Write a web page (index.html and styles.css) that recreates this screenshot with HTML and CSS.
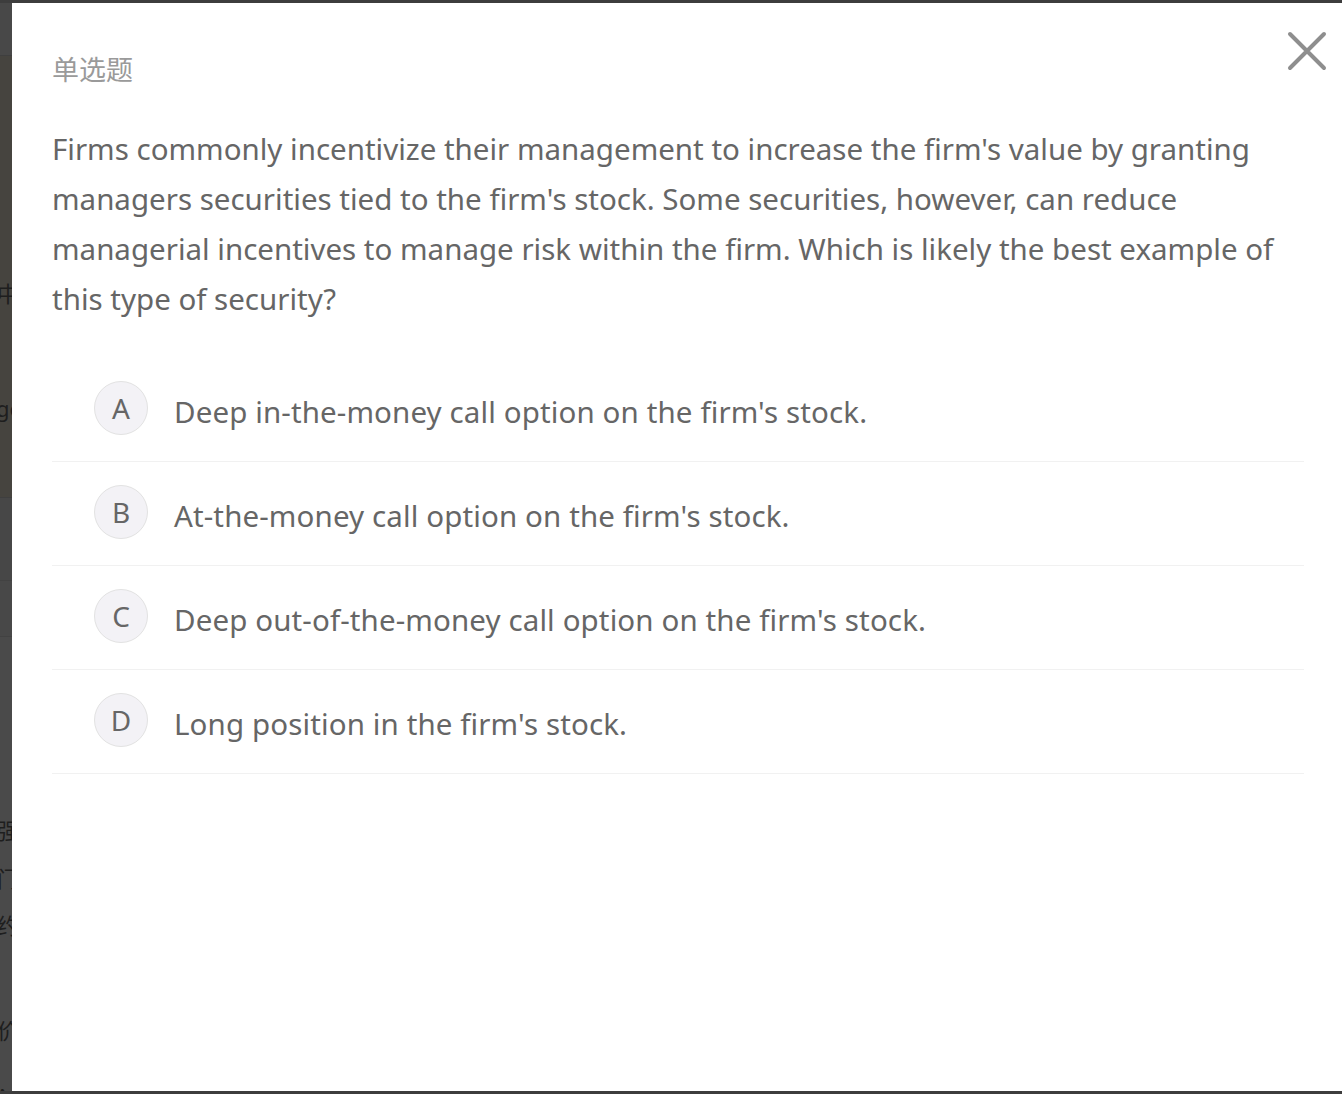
FILE: index.html
```html
<!DOCTYPE html>
<html lang="zh">
<head>
<meta charset="utf-8">
<title>单选题</title>
<link rel="stylesheet" href="styles.css">
</head>
<body>
<div class="screen">
  <div class="backdrop">
    <div class="bg-band bg-top"></div>
    <div class="bg-band bg-mid">
      <div class="bg-text bg-t1">中</div>
      <div class="bg-text bg-t2">ge</div>
    </div>
    <div class="bg-band bg-row"></div>
    <div class="bg-band bg-row2"></div>
    <div class="bg-band bg-low">
      <div class="bg-text bg-t3">强</div>
      <div class="bg-text bg-t4">门</div>
      <div class="bg-text bg-t5">约</div>
      <div class="bg-text bg-t6">价</div>
      <div class="bg-text bg-t7">，</div>
    </div>
  </div>
  <div class="modal">
    <button class="close" aria-label="关闭">
      <svg width="40" height="40" viewBox="0 0 40 40"><path d="M3 3 L37 37 M37 3 L3 37" stroke="#8e8e8e" stroke-width="4" stroke-linecap="round" fill="none"/></svg>
    </button>
    <div class="type">单选题</div>
    <p class="question">Firms commonly incentivize their management to increase the firm's value by granting managers securities tied to the firm's stock. Some securities, however, can reduce managerial incentives to manage risk within the firm. Which is likely the best example of this type of security?</p>
    <ul class="options">
      <li class="option"><span class="letter">A</span><span class="text">Deep in-the-money call option on the firm's stock.</span></li>
      <li class="option"><span class="letter">B</span><span class="text">At-the-money call option on the firm's stock.</span></li>
      <li class="option"><span class="letter">C</span><span class="text">Deep out-of-the-money call option on the firm's stock.</span></li>
      <li class="option"><span class="letter">D</span><span class="text">Long position in the firm's stock.</span></li>
    </ul>
  </div>
</div>
</body>
</html>
```
FILE: styles.css
```css
html, body {
  margin: 0;
  padding: 0;
}
body {
  background: #3d3d3d;
  font-family: "Noto Sans", "Noto Sans CJK SC", sans-serif;
  color: #666;
}
.screen {
  display: flex;
  height: 1094px;
  padding: 3px 0 3px 0;
  box-sizing: border-box;
  overflow: hidden;
}
.backdrop {
  width: 12px;
  flex: none;
  display: flex;
  flex-direction: column;
  overflow: hidden;
  background: #4a4a4a;
}
.bg-band {
  flex: none;
  overflow: hidden;
}
.bg-top {
  height: 52px;
  background: #484848;
  border-bottom: 1px solid #3f3f3f;
}
.bg-mid {
  height: 441px;
  background: #46443f;
  border-bottom: 1px solid #3f3f3f;
}
.bg-row {
  height: 82px;
  background: #474747;
  border-bottom: 1px solid #424242;
}
.bg-row2 {
  height: 55px;
  background: #484848;
  border-bottom: 1px solid #424242;
}
.bg-low {
  flex: 1;
  background: #4a4a4a;
}
.bg-text {
  margin-left: -3px;
  white-space: nowrap;
  font-size: 22px;
  line-height: 24px;
  color: #1e1e1e;
  font-family: "Noto Sans CJK SC", sans-serif;
}
.bg-t1 { margin-top: 224px; }
.bg-t2 { margin-top: 92px; margin-left: -4px; font-family: "Noto Sans", sans-serif; }
.bg-t3 { margin-top: 180px; }
.bg-t4 { margin-top: 24px; }
.bg-t5 { margin-top: 23px; }
.bg-t6 { margin-top: 81px; }
.bg-t7 { margin-top: 31px; }

.modal {
  position: relative;
  flex: 1;
  background: #fff;
  padding: 46px 38px 0 40px;
  box-sizing: border-box;
}
.close {
  position: absolute;
  top: 28px;
  right: 15px;
  width: 40px;
  height: 40px;
  padding: 0;
  margin: 0;
  border: 0;
  background: none;
  display: block;
}
.close svg { display: block; }
.type {
  font-family: "Noto Sans CJK SC", sans-serif;
  font-size: 27px;
  line-height: 40px;
  color: #9a9a9a;
}
.question {
  margin: 35px 0 0 0;
  font-size: 29.5px;
  line-height: 50px;
  color: #666;
}
.options {
  list-style: none;
  margin: 34px 0 0 0;
  padding: 0;
}
.option {
  display: flex;
  align-items: center;
  height: 104px;
  box-sizing: border-box;
  border-bottom: 1px solid #f1f1f1;
  padding-left: 42px;
}
.letter {
  flex: none;
  width: 52px;
  height: 52px;
  border: 1px solid #e2e2e2;
  border-radius: 50%;
  background: #f3f2f6;
  display: flex;
  align-items: center;
  justify-content: center;
  font-size: 28px;
  line-height: 1;
  color: #666;
  margin-top: -4px;
}
.text {
  margin-left: 26px;
  margin-top: 4px;
  font-size: 29.5px;
  letter-spacing: 0.12px;
  line-height: 50px;
  color: #666;
}
```
